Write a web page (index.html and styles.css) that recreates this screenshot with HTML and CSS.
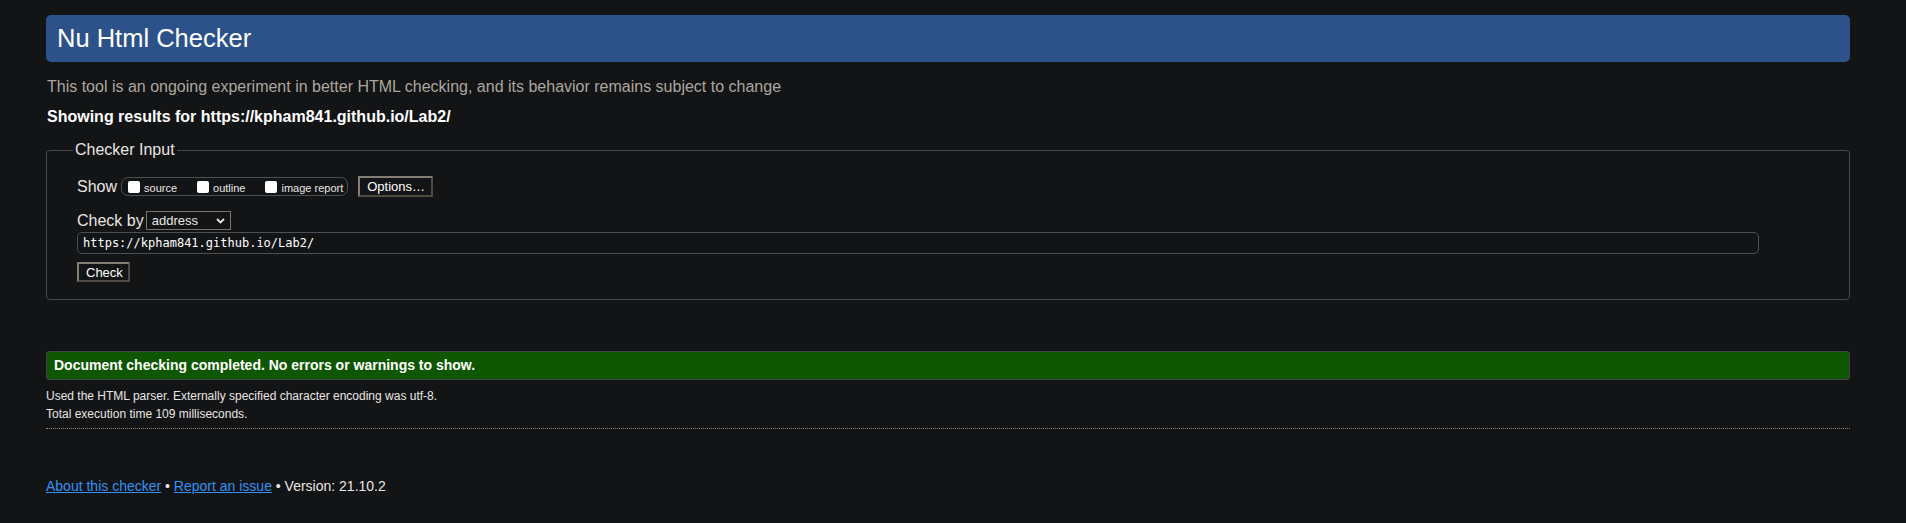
FILE: index.html
```html
<!DOCTYPE html>
<html lang="en">
<head>
<meta charset="utf-8">
<title>Nu Html Checker</title>
<link rel="stylesheet" href="styles.css">
</head>
<body>
<h1 class="title">Nu Html Checker</h1>
<p class="intro">This tool is an ongoing experiment in better HTML checking, and its behavior remains subject to change</p>
<p class="showing">Showing results for https://kpham841.github.io/Lab2/</p>
<form class="form">
  <fieldset class="input-set">
    <legend class="legend">Checker Input</legend>
    <div class="row row-show">
      <span class="big-label">Show</span>
      <span class="options-group">
        <label class="opt"><input type="checkbox" class="cb"><span class="opt-text">source</span></label>
        <label class="opt"><input type="checkbox" class="cb"><span class="opt-text">outline</span></label>
        <label class="opt"><input type="checkbox" class="cb"><span class="opt-text">image report</span></label>
      </span>
      <button type="button" class="btn btn-options">Options…</button>
    </div>
    <div class="row row-by">
      <span class="big-label">Check by</span>
      <span class="select">
        <span class="select-text">address</span>
        <svg class="chev" width="9" height="6" viewBox="0 0 9 6"><path d="M1 1 L4.5 4.5 L8 1" fill="none" stroke="#e8e6e3" stroke-width="1.8"/></svg>
      </span>
    </div>
    <div class="url-box">https://kpham841.github.io/Lab2/</div>
    <div class="row row-check">
      <button type="button" class="btn btn-check">Check</button>
    </div>
  </fieldset>
</form>
<div class="success">Document checking completed. No errors or warnings to show.</div>
<p class="details">Used the HTML parser. Externally specified character encoding was utf-8.</p>
<p class="details">Total execution time 109 milliseconds.</p>
<hr class="sep">
<p class="footer"><a href="#" class="link">About this checker</a> • <a href="#" class="link">Report an issue</a> • Version: 21.10.2</p>
</body>
</html>
```
FILE: styles.css
```css
html, body {
  background: #131416;
}
body {
  margin: 0;
  padding: 15px 56px 0 46px;
  color: #e8e6e3;
  font-family: "Liberation Sans", Arial, sans-serif;
  font-size: 16px;
}
.title {
  margin: 0;
  height: 47px;
  line-height: 47px;
  padding: 0 11px;
  background: #2c5289;
  border-radius: 5px;
  font-size: 25.5px;
  font-weight: normal;
  color: #fff;
}
.intro {
  margin: 16px 0 0 1px;
  line-height: 18px;
  color: #aca79f;
}
.showing {
  margin: 12px 0 0 1px;
  line-height: 18px;
  font-weight: bold;
  color: #fff;
}
.form {
  margin: 15px 0 0 0;
}
.input-set {
  margin: 0;
  border: 1px solid #45494c;
  border-radius: 4px;
  padding: 0 90px 17px 30px;
  min-width: 0;
}
.legend {
  margin-left: -4px;
  padding: 0 2px;
  font-size: 16px;
  line-height: 18px;
  color: #e8e6e3;
}
.row {
  display: flex;
  align-items: center;
}
.row-show {
  margin-top: 17px;
  height: 21px;
}
.big-label {
  font-size: 16px;
  line-height: 21px;
}
.options-group {
  display: flex;
  align-items: center;
  height: 19px;
  box-sizing: border-box;
  margin-left: 4px;
  padding: 0 4px 0 6px;
  border: 1px solid #4b5054;
  border-radius: 7px;
  gap: 20px;
}
.opt {
  display: flex;
  align-items: center;
  gap: 4px;
  font-size: 11px;
  line-height: 13px;
}
.opt-text {
  padding-top: 3px;
}
.cb {
  appearance: none;
  -webkit-appearance: none;
  margin: 0;
  width: 12px;
  height: 12px;
  background: #fff;
  border-radius: 2px;
}
.btn {
  font-family: "Liberation Sans", Arial, sans-serif;
  font-size: 13px;
  color: #fff;
  background: #131416;
  border: 2px solid #6f685f;
  border-top-color: #857d73;
  border-left-color: #857d73;
  border-right-color: #4f4a44;
  border-bottom-color: #4f4a44;
  border-radius: 0;
  margin: 0;
  padding: 0 7px;
  box-sizing: border-box;
}
.btn-options {
  margin-left: 10px;
  height: 21px;
  width: 75px;
}
.row-by {
  margin-top: 13px;
  height: 21px;
}
.select {
  display: flex;
  align-items: center;
  justify-content: space-between;
  margin-left: 2px;
  width: 85px;
  height: 19px;
  box-sizing: border-box;
  border: 1px solid #7a736a;
  padding: 0 5px 0 5px;
  font-size: 13px;
}
.chev {
  display: block;
}
.url-box {
  margin-top: 1px;
  width: 1682px;
  height: 22px;
  box-sizing: border-box;
  border: 1px solid #4b5054;
  border-radius: 5px;
  padding: 0 5px;
  font-family: "DejaVu Sans Mono", "Liberation Mono", monospace;
  font-size: 12px;
  line-height: 20px;
  color: #fff;
}
.row-check {
  margin-top: 8px;
}
.btn-check {
  height: 20px;
  width: 53px;
}
.success {
  margin-top: 51px;
  height: 29px;
  box-sizing: border-box;
  border: 1px solid #3f4448;
  border-radius: 3px;
  background: #0e5700;
  padding: 0 7px;
  font-size: 14px;
  font-weight: bold;
  line-height: 27px;
  color: #fff;
}
.details {
  margin: 0;
  font-size: 12px;
  line-height: 18px;
}
.success + .details {
  margin-top: 7px;
}
.sep {
  margin: 5px 0 0 0;
  border: 0;
  border-top: 1px dotted #8a8273;
  height: 0;
}
.footer {
  margin: 49px 0 0 0;
  font-size: 14px;
  line-height: 16px;
}
.link {
  color: #3391f5;
}
```
